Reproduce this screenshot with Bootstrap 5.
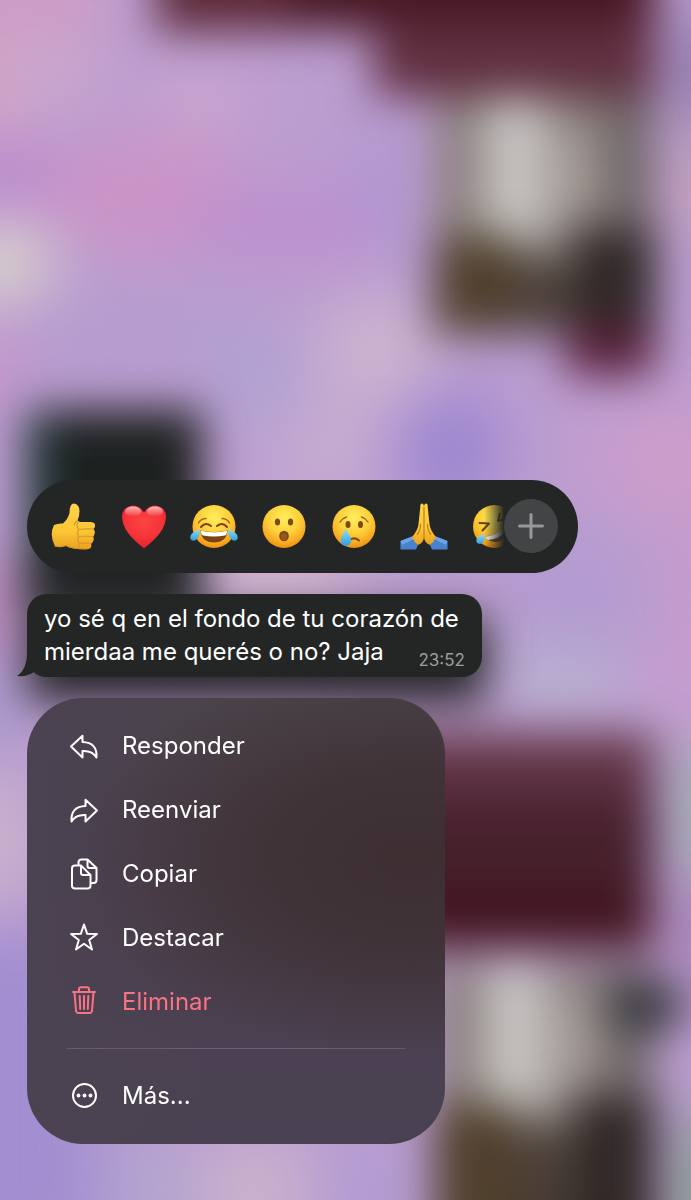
<!DOCTYPE html>
<html lang="es">
<head>
<meta charset="utf-8">
<meta name="viewport" content="width=device-width, initial-scale=1">
<title>Mensaje</title>
<link href="https://cdn.jsdelivr.net/npm/bootstrap@5.3.0/dist/css/bootstrap.min.css" rel="stylesheet">
<style>
  body { font-family: Inter, "Liberation Sans", sans-serif; background: #bc9ed0; color: #fff; }
  .screen { min-height: 100vh; padding: 24px 27px 56px; gap: 21px; overflow: hidden; isolation: isolate; }
  .wallpaper { inset: 0; z-index: -1; }
  .reactions { width: 100%; max-width: 551px; padding: 19px 20px 20px 23px; background: #242625; border-radius: 47px; }
  .reaction-strip { gap: 22px; min-width: 0; overflow: hidden;
    -webkit-mask-image: linear-gradient(to right, #000 calc(100% - 20px), transparent);
    mask-image: linear-gradient(to right, #000 calc(100% - 20px), transparent); }
  .plain-btn { border: 0; padding: 0; background: none; color: inherit; }
  .reaction-strip .plain-btn { flex: 0 0 48px; height: 48px; }
  .plain-btn svg, .menu-item svg { display: block; }
  .more-btn { flex: 0 0 54px; height: 54px; border-radius: 50%; background: #434446; color: #97989a; }
  .bubble { max-width: 460px; padding: 8px 23px 9px 17px; background: #242625; border-radius: 20px; font-size: 24px; line-height: 33px; }
  .bubble-tail { left: -10px; bottom: 0; }
  .bubble-time { right: 17px; bottom: 6px; font-size: 17px; line-height: 22px; color: #9b9c9c; }
  .context-menu { width: 100%; max-width: 418px; padding: 16px 40px; border-radius: 56px;
    background:
      radial-gradient(ellipse 330px 200px at 92% 36%, #3c2e31 0%, #3e3034cc 45%, #42343a00 100%),
      linear-gradient(90deg, #4b4252 0%, #4b425200 45%),
      linear-gradient(180deg, #4a444a 0%, #4a404a 30%, #4a3f4c 60%, #4b4152 78%, #494151 100%); }
  .menu-item { height: 64px; gap: 22px; padding-left: 1px; font-size: 24px; line-height: 32px; }
  .menu-item.danger { color: #fa7385; }
  .menu-rule { margin: 14px 0 15px; height: 1px; border: 0; opacity: 1; background: #665e6b; }
</style>
</head>
<body>
<main class="screen position-relative d-flex flex-column justify-content-end align-items-start">

  <svg class="wallpaper position-absolute w-100 h-100" viewBox="0 0 691 1200" preserveAspectRatio="none" aria-hidden="true">
    <defs>
      <filter id="soft" x="-150" y="-150" width="1000" height="1500" filterUnits="userSpaceOnUse" color-interpolation-filters="sRGB"><feGaussianBlur stdDeviation="32"/></filter>
      <filter id="near" x="-150" y="-150" width="1000" height="1500" filterUnits="userSpaceOnUse" color-interpolation-filters="sRGB"><feGaussianBlur stdDeviation="22"/></filter>
      <linearGradient id="redcard" x1="0" y1="0" x2="0" y2="1"><stop offset="0" stop-color="#6b3f50"/><stop offset=".2" stop-color="#603546"/><stop offset=".38" stop-color="#48222e"/><stop offset=".65" stop-color="#45202a"/><stop offset=".85" stop-color="#42141f"/><stop offset="1" stop-color="#400f1a"/></linearGradient>
      <radialGradient id="face" cx=".5" cy=".3" r=".72"><stop offset="0" stop-color="#ffee5e"/><stop offset=".5" stop-color="#fdd03a"/><stop offset=".8" stop-color="#f9ab22"/><stop offset="1" stop-color="#e98b12"/></radialGradient>
      <g id="photo">
        <rect x="434" y="96" width="220" height="230" fill="#8a807e"/>
        <rect x="484" y="98" width="62" height="144" fill="#c6c4c2"/>
        <rect x="544" y="130" width="56" height="90" fill="#a39a96"/>
        <rect x="602" y="96" width="52" height="120" fill="#6e6665"/>
        <rect x="434" y="236" width="82" height="98" fill="#50402c"/>
        <rect x="510" y="258" width="80" height="76" fill="#4d413b"/>
        <rect x="576" y="226" width="80" height="114" fill="#302826"/>
      </g>
    </defs>
    <rect width="691" height="1200" fill="#bc9ed0"/>
    <g filter="url(#soft)">
      <rect x="-80" y="-80" width="180" height="170" fill="#cd9dc5"/>
      <rect x="-80" y="60" width="110" height="80" fill="#d3a3c4"/>
      <ellipse cx="50" cy="75" rx="50" ry="30" fill="#caaacf"/>
      <ellipse cx="0" cy="180" rx="70" ry="35" fill="#b988cd"/>
      <ellipse cx="145" cy="195" rx="100" ry="60" fill="#cb93c6"/>
      <ellipse cx="200" cy="100" rx="50" ry="40" fill="#c9a5cf"/>
      <ellipse cx="290" cy="225" rx="110" ry="40" fill="#bd90ce"/>
      <ellipse cx="385" cy="190" rx="30" ry="80" fill="#b096d0"/>
      <ellipse cx="0" cy="264" rx="54" ry="42" fill="#dcd8cc"/>
      <ellipse cx="110" cy="340" rx="160" ry="55" fill="#b59ccf"/>
      <ellipse cx="255" cy="375" rx="50" ry="50" fill="#b0a2d2"/>
      <ellipse cx="380" cy="350" rx="65" ry="55" fill="#cdb4cf"/>
      <ellipse cx="330" cy="450" rx="60" ry="50" fill="#c6abd0"/>
      <ellipse cx="450" cy="450" rx="55" ry="65" fill="#9c86d0"/>
      <ellipse cx="670" cy="460" rx="80" ry="60" fill="#cc9dcb"/>
      <rect x="650" y="20" width="120" height="100" fill="#9682b4"/>
      <rect x="665" y="130" width="100" height="100" fill="#c3a1bd"/>
      <rect x="-80" y="310" width="100" height="120" fill="#c497cb"/>
      <ellipse cx="270" cy="580" rx="90" ry="60" fill="#d0b3cf"/>
      <ellipse cx="570" cy="600" rx="70" ry="70" fill="#b29ad0"/>
      <rect x="665" y="520" width="100" height="150" fill="#c79bcb"/>
      <ellipse cx="560" cy="680" rx="70" ry="35" fill="#b8b2cf"/>
      <ellipse cx="700" cy="690" rx="60" ry="35" fill="#c89ccf"/>
      <rect x="-60" y="560" width="90" height="90" fill="#b785b4"/>
      <rect x="-60" y="660" width="90" height="90" fill="#a99bcf"/>
      <rect x="-60" y="780" width="90" height="120" fill="#cbb4cc"/>
      <rect x="-60" y="930" width="160" height="330" fill="#a28ed0"/>
      <ellipse cx="150" cy="1190" rx="50" ry="40" fill="#b0a6cf"/>
      <ellipse cx="255" cy="1190" rx="60" ry="50" fill="#cbb4cc"/>
      <ellipse cx="370" cy="1190" rx="50" ry="50" fill="#b09bd2"/>
      <rect x="664" y="750" width="100" height="120" fill="#a3afb5"/>
      <rect x="664" y="890" width="100" height="90" fill="#a582b6"/>
      <rect x="664" y="1120" width="100" height="160" fill="#8fa09a"/>
    </g>
    <g filter="url(#near)">
      <rect x="156" y="-120" width="500" height="152" fill="#5c2a38"/>
      <rect x="374" y="0" width="282" height="96" fill="#602f40"/>
      <rect x="290" y="-120" width="366" height="140" fill="#461622"/>
      <use href="#photo"/>
      <rect x="566" y="326" width="88" height="50" fill="#59203a"/>
      <rect x="24" y="410" width="178" height="200" fill="#1d2120"/>
      <rect x="24" y="410" width="24" height="150" fill="#2a4647"/>
      <rect x="28" y="616" width="458" height="86" fill="#252527"/>
      <rect x="340" y="732" width="314" height="216" fill="url(#redcard)"/>
      <use href="#photo" y="868"/>
      <rect x="434" y="1190" width="220" height="150" fill="#463a34"/>
      <rect x="434" y="1150" width="82" height="150" fill="#50402c"/>
      <rect x="576" y="1150" width="80" height="150" fill="#302826"/>
      <ellipse cx="646" cy="1006" rx="42" ry="26" fill="#36373c"/>
    </g>
  </svg>

  <div class="reactions d-flex align-items-center" role="toolbar" aria-label="Reacciones">
    <div class="reaction-strip d-flex flex-grow-1">
      <button type="button" class="plain-btn" aria-label="Me gusta">
        <svg width="48" height="48" viewBox="0 0 48 48">
          <defs><linearGradient id="thumb" x1="0" y1="0" x2="0" y2="1"><stop offset="0" stop-color="#ffd448"/><stop offset=".6" stop-color="#fbc636"/><stop offset="1" stop-color="#e9a11f"/></linearGradient></defs>
          <path d="M4 23Q8 21 13 21.500Q18 17 19.500 11Q19.500 1.500 24 1.500Q29.500 2.500 29.500 9Q29.500 14 27.500 18.500L30 20H41Q45.500 20.500 45 24Q45 26 43.500 27Q45.500 29 44.500 32Q44 34 43 34.500Q44.500 37 43 39.500Q42.500 41 41 41.500Q42 44 40.500 46Q39 47.500 36 47.300Q22 47.500 16 44Q11 46 5 44.500Q-1 33 4 23Z" fill="url(#thumb)"/>
          <path d="M27.500 18.500Q25 20 24 23M28 20Q26 24 28.500 27.500Q26.500 31 28.500 34.500Q27 38 29 41Q28.500 44 30 46.500M29 27.500Q36 26.500 43.500 27M29 34.500Q36 34 43 34.500M29.500 41.300Q36 41 41 41.500" fill="none" stroke="#d9982a" stroke-width="1.200" stroke-linecap="round"/>
          <path d="M5 44Q10 45.500 16 43.500Q22 47 36 47" fill="none" stroke="#d58f1d" stroke-width="1"/>
        </svg>
      </button>
      <button type="button" class="plain-btn" aria-label="Corazón">
        <svg width="48" height="48" viewBox="0 0 48 48">
          <defs><radialGradient id="heart" cx=".5" cy=".35" r=".65"><stop offset="0" stop-color="#fb4540"/><stop offset=".65" stop-color="#f5333a"/><stop offset="1" stop-color="#d3202e"/></radialGradient>
          <linearGradient id="gloss" x1="0" y1="0" x2="0" y2="1"><stop offset="0" stop-color="#fff" stop-opacity=".65"/><stop offset="1" stop-color="#fff" stop-opacity="0"/></linearGradient></defs>
          <path d="M24 10.500Q20 3.500 12.500 3.500Q2 4.500 2 15.500Q2.500 30 24 46.500Q45.500 30 46 15.500Q46 4.500 35.500 3.500Q28 3.500 24 10.500Z" fill="url(#heart)"/>
          <ellipse cx="13" cy="9.500" rx="8" ry="5" fill="url(#gloss)"/><ellipse cx="35" cy="9.500" rx="8" ry="5" fill="url(#gloss)"/>
        </svg>
      </button>
      <button type="button" class="plain-btn" aria-label="Risa con lágrimas">
        <svg width="48" height="48" viewBox="0 0 48 48">
          <defs><linearGradient id="tear" x1="0" y1="0" x2="0" y2="1"><stop offset="0" stop-color="#8fdcfb"/><stop offset="1" stop-color="#2f9fe0"/></linearGradient></defs>
          <circle cx="24" cy="24.500" r="21.500" fill="url(#face)"/>
          <path d="M8.500 21Q11 16.500 16 16.500M39.500 21Q37 16.500 32 16.500" fill="none" stroke="#a9641a" stroke-width="1.500" stroke-linecap="round"/>
          <path d="M11 25Q15.500 19.500 21 24M27 24Q32.500 19.500 37 25" fill="none" stroke="#7a4311" stroke-width="2" stroke-linecap="round"/>
          <path d="M10.500 28.500Q24 31.500 37.500 28.500Q36.500 40.500 24 40.500Q11.500 40.500 10.500 28.500Z" fill="#7d4214"/>
          <path d="M11 28.800Q24 31.800 37 28.800Q37 33 35 33.500Q24 35.500 13 33.500Q11 33 11 28.800Z" fill="#fff"/>
          <path d="M10 27Q9.500 35 6 38Q2.500 40 .5 37Q-.5 33 4 30Z" fill="url(#tear)"/><path d="M38 27Q38.500 35 42 38Q45.500 40 47.500 37Q48.500 33 44 30Z" fill="url(#tear)"/>
        </svg>
      </button>
      <button type="button" class="plain-btn" aria-label="Sorpresa">
        <svg width="48" height="48" viewBox="0 0 48 48">
          <circle cx="24" cy="24.500" r="21.500" fill="url(#face)"/>
          <ellipse cx="17.500" cy="20" rx="2.600" ry="3.500" fill="#7a4a10"/><ellipse cx="30.500" cy="20" rx="2.600" ry="3.500" fill="#7a4a10"/>
          <ellipse cx="24" cy="34" rx="4.800" ry="5.300" fill="#7d4812"/><ellipse cx="24" cy="34.500" rx="3" ry="3.500" fill="#96591d"/>
        </svg>
      </button>
      <button type="button" class="plain-btn" aria-label="Tristeza">
        <svg width="48" height="48" viewBox="0 0 48 48">
          <circle cx="24" cy="24.500" r="21.500" fill="url(#face)"/>
          <path d="M10 20Q12 16.500 16.500 15M31.500 15Q36 16.500 38 20" fill="none" stroke="#a2651a" stroke-width="1.500" stroke-linecap="round"/>
          <ellipse cx="18" cy="22.500" rx="2.500" ry="3.500" fill="#7a4a10"/><ellipse cx="30.500" cy="22.500" rx="2.500" ry="3.500" fill="#7a4a10"/>
          <path d="M19.500 38Q24.500 34.500 29 38.500" fill="none" stroke="#7a4a10" stroke-width="2" stroke-linecap="round"/>
          <path d="M15.500 27Q21.500 35 21.200 39Q20.500 43.800 15.800 43.800Q11 43.500 10.800 39Q11 34.500 15.500 27Z" fill="url(#tear)"/>
        </svg>
      </button>
      <button type="button" class="plain-btn" aria-label="Gracias">
        <svg width="48" height="48" viewBox="0 0 48 48">
          <path d="M.5 39L12 34.500L18 43L16 47.500H.5ZM47.500 39L36 34.500L30 43L32 47.500H47.500Z" fill="#4b82cf"/>
          <path d="M.5 39L12 34.500L14 37L2 43ZM47.500 39L36 34.500L34 37L46 43Z" fill="#6ea4e8"/>
          <path d="M24 5Q23.800 1.500 22 1.500Q20 1.500 20.300 5L18.500 22Q18 28 12 35Q14 40 18 43Q23.500 41 24 35Q24.500 41 30 43Q34 40 36 35Q30 28 29.500 22L27.700 5Q28 1.500 26 1.500Q24.200 1.500 24 5Z" fill="url(#thumb)"/>
          <path d="M24 5V35M20.500 22Q20.500 28 17 33M27.500 22Q27.500 28 31 33" fill="none" stroke="#c57c17" stroke-width="1.200"/>
        </svg>
      </button>
      <button type="button" class="plain-btn" aria-label="Carcajada">
        <svg width="48" height="48" viewBox="0 0 48 48">
          <circle cx="24.500" cy="24.500" r="21.500" fill="url(#face)"/>
          <path d="M9.500 21L19 21.500L12.500 28.500" fill="none" stroke="#6e3f10" stroke-width="2" stroke-linejoin="round" stroke-linecap="round"/>
          <path d="M30 11L28 19L37 16" fill="none" stroke="#6e3f10" stroke-width="2" stroke-linejoin="round"/>
          <path d="M15 35Q28 33 37 23Q40 35 30 39Q21 42 15 35Z" fill="#7d4214"/>
          <path d="M15 35Q28 33 37 23L38 27Q31 37 18 38Z" fill="#fff"/>
          <path d="M14.500 32Q15.500 41 10 42Q5.500 41.500 6.500 37.500Q8 34 14.500 32Z" fill="url(#tear)"/>
        </svg>
      </button>
    </div>
    <button type="button" class="plain-btn more-btn d-flex align-items-center justify-content-center" aria-label="Más reacciones">
      <svg width="26" height="26" viewBox="0 0 26 26" fill="none" stroke="currentColor" stroke-width="3" stroke-linecap="round"><path d="M13 1.500V24.500M1.500 13H24.500"/></svg>
    </button>
  </div>

  <div class="bubble position-relative">
    <svg class="bubble-tail position-absolute" width="32" height="28" viewBox="0 0 32 28" aria-hidden="true"><path d="M10 0Q11 20 0 27Q10 28 17 23Q22 28 32 28V0Z" fill="#242625"/></svg>
    <p class="position-relative mb-0">yo sé q en el fondo de tu corazón de<br>mierdaa me querés o no? Jaja</p>
    <time class="bubble-time position-absolute" datetime="23:52">23:52</time>
  </div>

  <div class="context-menu" role="menu">
    <button type="button" class="plain-btn menu-item w-100 d-flex align-items-center" role="menuitem">
      <svg width="32" height="32" viewBox="0 0 32 32" fill="none" stroke="currentColor" stroke-width="2" stroke-linejoin="round" stroke-linecap="round"><path d="M14.500 5.800L3 16.500L14.500 27.500V21Q24.500 20.500 28.500 27.500Q29.500 12.500 14.500 12Z"/></svg>
      <span>Responder</span>
    </button>
    <button type="button" class="plain-btn menu-item w-100 d-flex align-items-center" role="menuitem">
      <svg width="32" height="32" viewBox="0 0 32 32" fill="none" stroke="currentColor" stroke-width="2" stroke-linejoin="round" stroke-linecap="round"><path d="M17.500 5.800L29 16.500L17.500 27.500V21Q7.500 20.500 3.500 27.500Q2.500 12.500 17.500 12Z"/></svg>
      <span>Reenviar</span>
    </button>
    <button type="button" class="plain-btn menu-item w-100 d-flex align-items-center" role="menuitem">
      <svg width="32" height="32" viewBox="0 0 32 32" fill="none" stroke="currentColor" stroke-width="2" stroke-linejoin="round" stroke-linecap="round"><path d="M10.500 7V4.500Q10.500 1.500 13.500 1.500H19.500L28.500 10V22Q28.500 25 25.500 25H23M19.500 1.500V8Q19.500 10 21.500 10H28.500M7 7.500H13L22.500 17V27.500Q22.500 30.500 19.500 30.500H7Q4 30.500 4 27.500V10.500Q4 7.500 7 7.500ZM13 7.500V15Q13 17 15 17H22.500"/></svg>
      <span>Copiar</span>
    </button>
    <button type="button" class="plain-btn menu-item w-100 d-flex align-items-center" role="menuitem">
      <svg width="32" height="32" viewBox="0 0 32 32" fill="none" stroke="currentColor" stroke-width="2" stroke-linejoin="round"><path d="M16 2.500L19.200 11.800L29 12L21.200 18L24 27.500L16 21.800L8 27.500L10.800 18L3 12L12.800 11.800Z"/></svg>
      <span>Destacar</span>
    </button>
    <button type="button" class="plain-btn menu-item danger w-100 d-flex align-items-center" role="menuitem">
      <svg width="32" height="32" viewBox="0 0 32 32" fill="none" stroke="currentColor" stroke-width="2" stroke-linejoin="round" stroke-linecap="round"><path d="M5 6H27M11 5.500V3Q11 1.200 13 1.200H19Q21 1.200 21 3V5.500M6.500 6.500L8 24.500Q8.200 27 10.500 27H21.500Q23.800 27 24 24.500L25.500 6.500M11.700 10L12.200 23M16 10V23M20.300 10L19.800 23"/></svg>
      <span>Eliminar</span>
    </button>
    <hr class="menu-rule">
    <button type="button" class="plain-btn menu-item w-100 d-flex align-items-center" role="menuitem">
      <svg width="32" height="32" viewBox="0 0 32 32" fill="none" stroke="currentColor" stroke-width="2"><circle cx="16.500" cy="15.500" r="11.500"/><g fill="currentColor" stroke="none"><circle cx="10.500" cy="15.500" r="1.900"/><circle cx="16.500" cy="15.500" r="1.900"/><circle cx="22.500" cy="15.500" r="1.900"/></g></svg>
      <span>Más...</span>
    </button>
  </div>
</main>
<script src="https://cdn.jsdelivr.net/npm/bootstrap@5.3.0/dist/js/bootstrap.bundle.min.js"></script>
</body>
</html>
